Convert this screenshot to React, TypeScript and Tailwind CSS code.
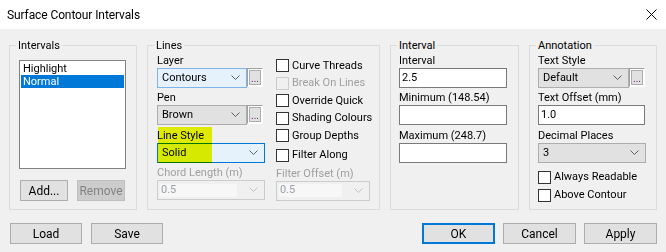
import type { ReactNode } from "react";

type ComboTone = "normal" | "hover" | "focus" | "disabled";

const COMBO_CLASSES: Record<ComboTone, string> = {
  normal: "border-[#adadad] bg-[#e1e1e1]",
  hover: "border-[#7eb4ea] bg-[#e5f1fb]",
  focus: "border-[#0078d7] bg-[#e5f1fb]",
  disabled: "border-[#cccccc] bg-[#f0f0f0] text-[#a0a0a0]",
};

function Chevron({ light = false }: { light?: boolean }) {
  return (
    <svg width="9" height="6" viewBox="0 0 9 6" className="shrink-0">
      <polyline
        points="0.5,0.5 4.5,4.5 8.5,0.5"
        fill="none"
        stroke={light ? "#c0c0c0" : "#606060"}
        strokeWidth="1"
      />
    </svg>
  );
}

function Combo({
  value,
  width,
  tone = "normal",
}: {
  value: string;
  width: string;
  tone?: ComboTone;
}) {
  const disabled = tone === "disabled";
  return (
    <div
      className={`flex h-[20px] ${width} items-center border pr-[6px] ${COMBO_CLASSES[tone]}`}
    >
      {disabled ? (
        <span className="ml-[2px] flex h-[13px] flex-1 items-center bg-[#f7f7f7] pl-[1px] text-[#9aa0a8]">
          {value}
        </span>
      ) : (
        <span className="flex-1 pl-[4px]">{value}</span>
      )}
      <span className={disabled ? "ml-[12px]" : ""}>
        <Chevron light={disabled} />
      </span>
    </div>
  );
}

function Dots() {
  return (
    <div className="flex h-[19px] w-[16px] items-stretch border-t border-l border-[#a0a0a0] border-r border-b border-r-white border-b-white bg-white">
      <div className="m-[1px] flex flex-1 items-end justify-center border border-[#adadad] bg-[#e1e1e1] text-[10px] leading-[10px] text-[#60207a]">
        ...
      </div>
    </div>
  );
}

function Field({ value = "", width = "w-[108px]" }: { value?: string; width?: string }) {
  return (
    <div className={`flex h-[20px] ${width} items-center border border-[#7a7a7a] bg-white pl-[2px]`}>
      {value}
    </div>
  );
}

function Label({
  children,
  disabled = false,
  h = "h-[17px]",
}: {
  children: ReactNode;
  disabled?: boolean;
  h?: string;
}) {
  return (
    <div className={`flex ${h} items-end leading-[14px] ${disabled ? "text-[#a0a0a0]" : ""}`}>
      {children}
    </div>
  );
}

function Check({ label, disabled = false, h = "h-[17.5px]" }: { label: string; disabled?: boolean; h?: string }) {
  return (
    <div className={`flex ${h} items-center`}>
      <span
        className={`h-[13px] w-[13px] shrink-0 border ${
          disabled ? "border-[#cccccc] bg-[#f0f0f0]" : "border-[#333333] bg-white"
        }`}
      />
      <span className={`ml-[3px] whitespace-nowrap ${disabled ? "text-[#a0a0a0]" : ""}`}>{label}</span>
    </div>
  );
}

function Btn({
  label,
  width = "w-[73px]",
  disabled = false,
  primary = false,
}: {
  label: string;
  width?: string;
  disabled?: boolean;
  primary?: boolean;
}) {
  return (
    <div
      className={`flex h-[21px] ${width} items-center justify-center text-[12px] ${
        primary
          ? "border-2 border-[#0078d7] bg-[#e1e1e1]"
          : disabled
            ? "border border-[#bfbfbf] bg-[#cccccc] text-[#838383]"
            : "border border-[#adadad] bg-[#e1e1e1]"
      }`}
    >
      {label}
    </div>
  );
}

function Group({
  title,
  width,
  className = "",
  children,
}: {
  title: string;
  width: string;
  className?: string;
  children: ReactNode;
}) {
  return (
    <div className={`relative h-[165px] ${width} shrink-0 border border-[#dcdcdc] ${className}`}>
      <span className="absolute top-[-8px] left-[6px] bg-[#f0f0f0] px-[2px] leading-[15px]">{title}</span>
      {children}
    </div>
  );
}

export default function App() {
  return (
    <div className="h-[252px] w-[666px] overflow-hidden bg-[#f0f0f0] font-['Roboto','Liberation_Sans',sans-serif] text-[11px] text-black">
      {/* title bar */}
      <div className="flex h-[29px] items-center justify-between bg-white pr-[9px] pl-[7px] text-[12px]">
        <span className="tracking-[-0.1px]">Surface Contour Intervals</span>
        <svg width="11" height="11" viewBox="0 0 11 11">
          <path d="M0.5 0.5 L10.5 10.5 M10.5 0.5 L0.5 10.5" stroke="#000" strokeWidth="1" />
        </svg>
      </div>

      <div className="flex gap-[10px] pt-[16px] pl-[9px]">
        <Group title="Intervals" width="w-[128px]" className="pt-[14px] pl-[9px]">
          <div className="h-[109px] w-[107px] border border-[#828282] bg-white p-[1px] leading-[13px]">
            <div className="h-[13px] pl-[2px]">Highlight</div>
            <div className="h-[13px] bg-[#0078d7] pl-[2px] text-white">Normal</div>
          </div>
          <div className="mt-[11px] ml-[1px] flex gap-[9px]">
            <Btn label="Add..." width="w-[48px]" />
            <Btn label="Remove" width="w-[48px]" disabled />
          </div>
        </Group>

        <Group title="Lines" width="w-[233px]" className="flex pt-[5px] pl-[9px]">
          <div className="relative w-[108px]">
            <Label>Layer</Label>
            <div className="flex">
              <Combo value="Contours" width="w-[90px]" tone="hover" />
              <Dots />
            </div>
            <Label>Pen</Label>
            <div className="flex">
              <Combo value="Brown" width="w-[90px]" />
              <Dots />
            </div>
            <Label h="h-[18px]">Line Style</Label>
            <Combo value="Solid" width="w-[108px]" tone="focus" />
            <Label disabled>Chord Length (m)</Label>
            <Combo value="0.5" width="w-[108px]" tone="disabled" />
            {/* highlighter mark */}
            <span className="pointer-events-none absolute top-[76px] left-[1px] h-[36px] w-[54px] bg-[#eef800] mix-blend-multiply" />
          </div>
          <div className="ml-[11px] w-[94px] pt-[6px]">
            <Check label="Curve Threads" />
            <Check label="Break On Lines" disabled />
            <Check label="Override Quick" />
            <Check label="Shading Colours" />
            <Check label="Group Depths" />
            <Check label="Filter Along" h="h-[18px] mt-[2px]" />
            <Label disabled h="h-[16px]">Filter Offset (m)</Label>
            <Combo value="0.5" width="w-[94px]" tone="disabled" />
          </div>
        </Group>

        <Group title="Interval" width="w-[129px]" className="pt-[5px] pl-[8px]">
          <Label>Interval</Label>
          <Field value="2.5" />
          <Label>Minimum (148.54)</Label>
          <Field />
          <Label h="h-[18px]">Maximum (248.7)</Label>
          <Field />
        </Group>

        <Group title="Annotation" width="w-[128px]" className="pt-[5px] pl-[8px]">
          <Label>Text Style</Label>
          <div className="flex">
            <Combo value="Default" width="w-[91px]" />
            <Dots />
          </div>
          <Label>Text Offset (mm)</Label>
          <Field value="1.0" width="w-[107px]" />
          <Label h="h-[18px]">Decimal Places</Label>
          <Combo value="3" width="w-[108px]" />
          <div className="pt-[5px]">
            <Check label="Always Readable" h="h-[18px]" />
            <Check label="Above Contour" h="h-[18px]" />
          </div>
        </Group>
      </div>

      <div className="flex pt-[13px] pl-[10px]">
        <div className="flex gap-[9px]">
          <Btn label="Load" width="w-[72px]" />
          <Btn label="Save" width="w-[72px]" />
        </div>
        <div className="ml-[259px] flex gap-[8px]">
          <Btn label="OK" width="w-[73px]" primary />
          <Btn label="Cancel" width="w-[73px]" />
          <Btn label="Apply" width="w-[73px]" />
        </div>
      </div>
    </div>
  );
}
